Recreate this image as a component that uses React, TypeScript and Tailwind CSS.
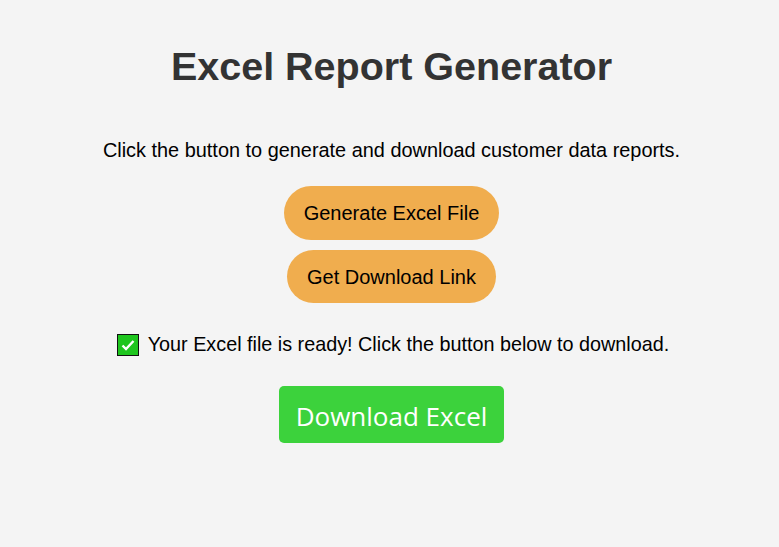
import React from "react";

export default function App() {
  return (
    <div className="min-h-[547px] bg-[#f4f4f4] font-['Liberation_Sans',Arial,sans-serif] text-center">
      <div className="pt-[43px] pl-[4px] flex flex-col items-center">
        <h1 className="text-[39.5px] font-bold leading-[46px] text-[#333333]">
          Excel Report Generator
        </h1>
        <p className="mt-[50px] text-[19.9px] leading-[23px] text-black">
          Click the button to generate and download customer data reports.
        </p>
        <button className="mt-[24px] h-[54px] rounded-full bg-[#f0ad4e] px-[20px] text-[20px] leading-[24px] text-black">
          Generate Excel File
        </button>
        <button className="mt-[10px] h-[53px] rounded-full bg-[#f0ad4e] px-[20px] text-[20px] leading-[24px] text-black">
          Get Download Link
        </button>
        <div className="mt-[30px] ml-[3px] flex items-center gap-[9px] text-[19.8px] leading-[23px] text-black">
          <span className="flex h-[22px] w-[22px] items-center justify-center border border-[#111111] bg-[#1ec51e]">
            <svg width="16" height="16" viewBox="0 0 16 16" fill="none">
              <path d="M2.5 8.5l3.5 3.5L13.5 4" stroke="white" strokeWidth="2.4" />
            </svg>
          </span>
          <span>Your Excel file is ready! Click the button below to download.</span>
        </div>
        <button className="mt-[30px] h-[57px] rounded-[5px] bg-[#3cd23c] px-[17px] pt-[3px] font-['Open_Sans',sans-serif] text-[26px] leading-[37px] text-white">
          Download Excel
        </button>
      </div>
    </div>
  );
}
